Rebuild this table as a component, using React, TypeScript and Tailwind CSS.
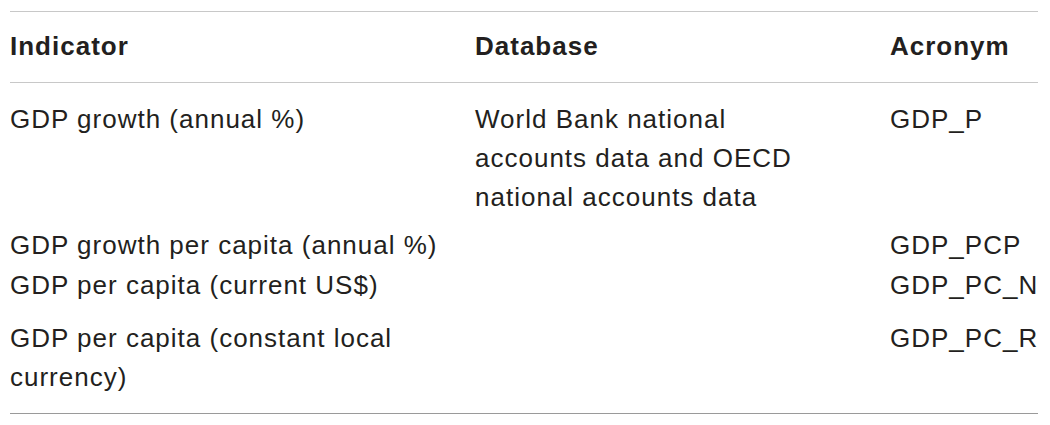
const rows = [
  {
    indicator: "GDP growth (annual %)",
    database: "World Bank national accounts data and OECD national accounts data",
    acronym: "GDP_P",
    pad: "pt-[17px]",
  },
  { indicator: "GDP growth per capita (annual %)", database: "", acronym: "GDP_PCP", pad: "pt-[9px]" },
  { indicator: "GDP per capita (current US$)", database: "", acronym: "GDP_PC_N", pad: "pt-[1px]" },
  {
    indicator: "GDP per capita (constant local currency)",
    database: "",
    acronym: "GDP_PC_R",
    pad: "pt-[14px] pb-[16px]",
  },
];

export default function App() {
  return (
    <div className="min-h-screen bg-white pt-[11px] pl-[10px] pr-[12px] text-[#231f20] text-[26px] leading-[39px] tracking-[1px] font-['Liberation_Sans',Arial,sans-serif]">
      <div className="border-t border-b border-t-[#c8c8c8] border-b-[#9a9a9a]">
        {/* Header */}
        <div className="grid grid-cols-[465px_415px_1fr] pt-[15px] pb-[16px] border-b border-[#c8c8c8] font-bold">
          <div>Indicator</div>
          <div>Database</div>
          <div>Acronym</div>
        </div>

        {rows.map((r) => (
          <div key={r.acronym} className={`grid grid-cols-[465px_415px_1fr] ${r.pad}`}>
            <div className="pr-[20px]">{r.indicator}</div>
            <div className="pr-[60px]">{r.database}</div>
            <div>{r.acronym}</div>
          </div>
        ))}
      </div>
    </div>
  );
}
